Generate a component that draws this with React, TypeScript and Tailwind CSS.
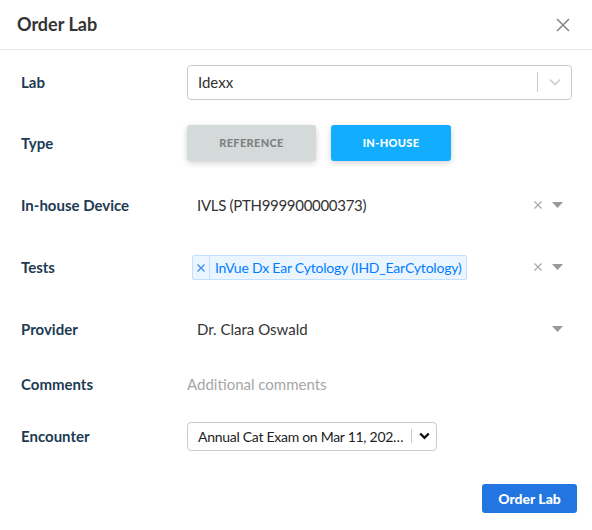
import React from "react";

const font = { fontFamily: "Lato, 'Noto Sans', sans-serif" };

function Label({ children }: { children: React.ReactNode }) {
  return (
    <div className="w-[166px] shrink-0 text-[15px] font-bold text-[#1d3b53]">{children}</div>
  );
}

function Caret() {
  return (
    <svg width="11" height="6" viewBox="0 0 11 6" className="block">
      <path d="M0 0 L11 0 L5.5 6 Z" fill="#999" />
    </svg>
  );
}

function SmallX({ color = "#aaa" }: { color?: string }) {
  return (
    <svg width="8" height="8" viewBox="0 0 8 8" className="block">
      <path d="M0.5 0.5 L7.5 7.5 M7.5 0.5 L0.5 7.5" stroke={color} strokeWidth="1.3" />
    </svg>
  );
}

export default function App() {
  return (
    <div className="w-[592px] h-[530px] bg-white flex flex-col" style={font}>
      <div className="h-[50px] shrink-0 flex items-center justify-between pl-[17px] pr-[22px] border-b border-[#e6e6e6]">
        <div className="text-[18px] font-bold text-[#333]">Order Lab</div>
        <svg width="14" height="14" viewBox="0 0 14 14" className="block">
          <path d="M1 1 L13 13 M13 1 L1 13" stroke="#888" strokeWidth="1.6" />
        </svg>
      </div>

      <div className="flex flex-col pl-[21px] pr-[20px]">
        {/* Lab */}
        <div className="mt-[14px] h-9 flex items-center">
          <Label>Lab</Label>
          <div className="flex-1 h-[35px] border border-[#cccccc] rounded-[4px] flex items-center pl-[10px]">
            <div className="flex-1 text-[15px] text-[#333]">Idexx</div>
            <div className="w-px h-5 bg-[#cccccc]" />
            <div className="w-[33px] flex items-center justify-center">
              <svg width="12" height="8" viewBox="0 0 12 8" className="block">
                <path d="M1 1.5 L6 6.5 L11 1.5" stroke="#cccccc" strokeWidth="1.6" fill="none" />
              </svg>
            </div>
          </div>
        </div>

        {/* Type */}
        <div className="mt-[25px] h-9 flex items-center">
          <Label>Type</Label>
          <div className="flex gap-[15px]">
            <div className="w-[129px] h-9 rounded-[3px] bg-[#d4d9da] shadow-[0_2px_6px_rgba(0,0,0,0.18)] flex items-center justify-center text-[11px] font-black tracking-[0.03em] text-[#7d8182]">
              REFERENCE
            </div>
            <div className="w-[120px] h-9 rounded-[3px] bg-[#12aefd] shadow-[0_2px_6px_rgba(0,0,0,0.18)] flex items-center justify-center text-[11px] font-black tracking-[0.03em] text-white">
              IN-HOUSE
            </div>
          </div>
        </div>

        {/* In-house Device */}
        <div className="mt-[26px] h-9 flex items-center">
          <Label>In-house Device</Label>
          <div className="flex-1 flex items-center pl-[10px]">
            <div className="flex-1 text-[15px] tracking-[-0.02em] text-[#333]">IVLS (PTH999900000373)</div>
            <SmallX />
            <div className="ml-[10px] mr-[9px]"><Caret /></div>
          </div>
        </div>

        {/* Tests */}
        <div className="mt-[26px] h-9 flex items-center">
          <Label>Tests</Label>
          <div className="flex-1 flex items-center pl-[5px]">
            <div className="flex-1">
              <div className="inline-flex h-[25px] items-stretch rounded-[2px] border border-[#c2e0ff] bg-[#ebf5ff] text-[#007eff]">
                <div className="w-[17px] flex items-center justify-center border-r border-[#c2e0ff]">
                  <SmallX color="#3d8fe8" />
                </div>
                <div className="px-[5px] flex items-center text-[14px] tracking-[-0.015em] whitespace-nowrap">InVue Dx Ear Cytology (IHD_EarCytology)</div>
              </div>
            </div>
            <SmallX />
            <div className="ml-[10px] mr-[9px]"><Caret /></div>
          </div>
        </div>

        {/* Provider */}
        <div className="mt-[26px] h-9 flex items-center">
          <Label>Provider</Label>
          <div className="flex-1 flex items-center pl-[10px]">
            <div className="flex-1 text-[15px] text-[#333]">Dr. Clara Oswald</div>
            <div className="ml-[10px] mr-[9px]"><Caret /></div>
          </div>
        </div>

        {/* Comments */}
        <div className="mt-[19px] h-9 flex items-center">
          <Label>Comments</Label>
          <div className="flex-1 text-[15px] text-[#a6a6a6]">Additional comments</div>
        </div>

        {/* Encounter */}
        <div className="mt-[16px] h-9 flex items-center">
          <Label>Encounter</Label>
          <div className="w-[250px] h-[29px] border border-[#cccccc] rounded-[4px] flex items-center pl-[10px]">
            <div className="flex-1 whitespace-nowrap text-[14px] tracking-[-0.02em] text-[#222]">Annual Cat Exam on Mar 11, 202…</div>
            <div className="w-px h-[14px] bg-[#cccccc]" />
            <div className="w-[24px] flex items-center justify-center">
              <svg width="11" height="8" viewBox="0 0 11 8" className="block">
                <path d="M1.2 1.5 L5.5 5.8 L9.8 1.5" stroke="#111" strokeWidth="2.4" fill="none" />
              </svg>
            </div>
          </div>
        </div>
      </div>

      <div className="mt-[30px] flex justify-end pr-[15px]">
        <div className="w-[95px] h-[29px] rounded-[3px] bg-[#2176e2] flex items-center justify-center text-[14px] font-black text-white">
          Order Lab
        </div>
      </div>
    </div>
  );
}
